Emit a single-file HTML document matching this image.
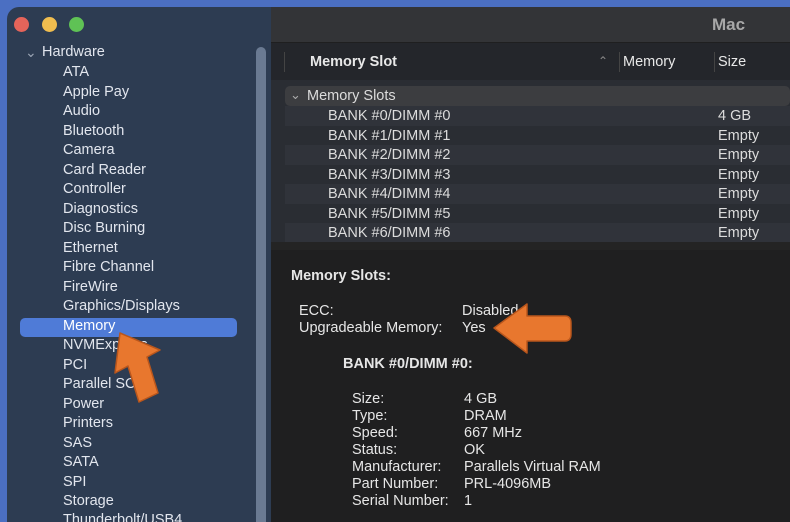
<!DOCTYPE html><html><head><style>
*{margin:0;padding:0;box-sizing:border-box}
html,body{width:790px;height:522px;overflow:hidden}
body{background:#4b6fc2;font-family:"Liberation Sans",sans-serif;position:relative}
.a{position:absolute;white-space:nowrap}
#sb{position:absolute;left:7px;top:7px;width:264px;height:515px;background:#2d3c52;border-top-left-radius:12px}
#rp{position:absolute;left:271px;top:7px;width:519px;height:515px;background:#1f1f20}
.si{position:absolute;left:63px;font-size:14.5px;color:#e2e6ee}
.row{position:absolute;left:285px;width:505px;height:19.5px;font-size:14.5px;color:#dcdcdc}
.row span{position:absolute;top:2px}
.d{font-size:14.5px;color:#e6e6e6}
</style></head><body>
<div id="sb"></div>
<div class="a" style="left:14px;top:17px;width:15px;height:15px;border-radius:50%;background:#e5645a"></div>
<div class="a" style="left:42px;top:17px;width:15px;height:15px;border-radius:50%;background:#f0bd4f"></div>
<div class="a" style="left:69px;top:17px;width:15px;height:15px;border-radius:50%;background:#5fc255"></div>
<div class="a" style="left:256px;top:47px;width:10px;height:480px;border-radius:5px;background:#6a7a92"></div>
<div class="a" style="left:25px;top:44px;font-size:14px;color:#9aa4b4">⌄</div>
<div class="a" style="left:42px;top:44px;font-size:14.5px;color:#e2e6ee">Hardware</div>
<div class="a" style="left:20px;top:318px;width:217px;height:19px;border-radius:5px;background:#4f7bd7"></div>
<div class="si" style="top:64px">ATA</div>
<div class="si" style="top:84px">Apple Pay</div>
<div class="si" style="top:103px">Audio</div>
<div class="si" style="top:123px">Bluetooth</div>
<div class="si" style="top:142px">Camera</div>
<div class="si" style="top:162px">Card Reader</div>
<div class="si" style="top:181px">Controller</div>
<div class="si" style="top:201px">Diagnostics</div>
<div class="si" style="top:220px">Disc Burning</div>
<div class="si" style="top:240px">Ethernet</div>
<div class="si" style="top:259px">Fibre Channel</div>
<div class="si" style="top:279px">FireWire</div>
<div class="si" style="top:298px">Graphics/Displays</div>
<div class="si" style="top:318px;color:#fff">Memory</div>
<div class="si" style="top:337px">NVMExpress</div>
<div class="si" style="top:357px">PCI</div>
<div class="si" style="top:376px">Parallel SCSI</div>
<div class="si" style="top:396px">Power</div>
<div class="si" style="top:415px">Printers</div>
<div class="si" style="top:435px">SAS</div>
<div class="si" style="top:454px">SATA</div>
<div class="si" style="top:474px">SPI</div>
<div class="si" style="top:493px">Storage</div>
<div class="si" style="top:512px">Thunderbolt/USB4</div>

<div id="rp"></div>
<div class="a" style="left:271px;top:7px;width:519px;height:35px;background:#333437"></div>
<div class="a" style="left:712px;top:15px;font-size:17px;font-weight:bold;color:#a8a8a8">Mac</div>
<div class="a" style="left:271px;top:43px;width:519px;height:37px;background:#24262b"></div>
<div class="a" style="left:284px;top:52px;width:1px;height:20px;background:#444"></div>
<div class="a" style="left:619px;top:52px;width:1px;height:20px;background:#444"></div>
<div class="a" style="left:714px;top:52px;width:1px;height:20px;background:#444"></div>
<div class="a" style="left:310px;top:54px;font-size:14.5px;font-weight:bold;color:#e8e8e8">Memory Slot</div>
<div class="a" style="left:598px;top:54px;font-size:12px;color:#888">⌃</div>
<div class="a" style="left:623px;top:54px;font-size:14.5px;color:#e8e8e8">Memory</div>
<div class="a" style="left:718px;top:54px;font-size:14.5px;color:#e8e8e8">Size</div>
<div class="a" style="left:271px;top:80px;width:519px;height:165px;background:#2a2d33"></div>
<div class="a" style="left:285px;top:86px;width:505px;height:20px;border-radius:5px;background:#3c3d40"></div>
<div class="a" style="left:290px;top:87px;font-size:13px;color:#aaa">⌄</div>
<div class="a" style="left:307px;top:88px;font-size:14.5px;color:#dcdcdc">Memory Slots</div>
<div class="row" style="top:106px;background:#30333a"><span style="left:43px">BANK #0/DIMM #0</span><span style="left:433px">4 GB</span></div>
<div class="row" style="top:125.5px"><span style="left:43px">BANK #1/DIMM #1</span><span style="left:433px">Empty</span></div>
<div class="row" style="top:145px;background:#30333a"><span style="left:43px">BANK #2/DIMM #2</span><span style="left:433px">Empty</span></div>
<div class="row" style="top:164.5px"><span style="left:43px">BANK #3/DIMM #3</span><span style="left:433px">Empty</span></div>
<div class="row" style="top:184px;background:#30333a"><span style="left:43px">BANK #4/DIMM #4</span><span style="left:433px">Empty</span></div>
<div class="row" style="top:203.5px"><span style="left:43px">BANK #5/DIMM #5</span><span style="left:433px">Empty</span></div>
<div class="row" style="top:223px;background:#30333a"><span style="left:43px">BANK #6/DIMM #6</span><span style="left:433px">Empty</span></div>
<div class="a" style="left:271px;top:242px;width:519px;height:8px;background:#242424"></div>

<div class="a d" style="left:291px;top:268px;font-weight:bold">Memory Slots:</div>
<div class="a d" style="left:299px;top:303px">ECC:</div>
<div class="a d" style="left:462px;top:303px">Disabled</div>
<div class="a d" style="left:299px;top:320px">Upgradeable Memory:</div>
<div class="a d" style="left:462px;top:320px">Yes</div>
<div class="a d" style="left:343px;top:356px;font-weight:bold">BANK #0/DIMM #0:</div>
<div class="a d" style="left:352px;top:391px;line-height:17px">Size:<br>Type:<br>Speed:<br>Status:<br>Manufacturer:<br>Part Number:<br>Serial Number:</div>
<div class="a d" style="left:464px;top:391px;line-height:17px">4 GB<br>DRAM<br>667 MHz<br>OK<br>Parallels Virtual RAM<br>PRL-4096MB<br>1</div>

<svg class="a" style="left:0;top:0" width="790" height="522">
<g fill="#e8772e" stroke="#b9561c" stroke-width="1.5" stroke-linejoin="round">
<path d="M120,333 L160,350 L147,357 L158,393 L139,402 L128,366 L115,373 Z"/>
<path d="M494,328 L527,304 L527,316 L565,316 Q571,316 571,323 L571,334 Q571,341 565,341 L527,341 L527,353 Z"/>
</g></svg>
</body></html>
